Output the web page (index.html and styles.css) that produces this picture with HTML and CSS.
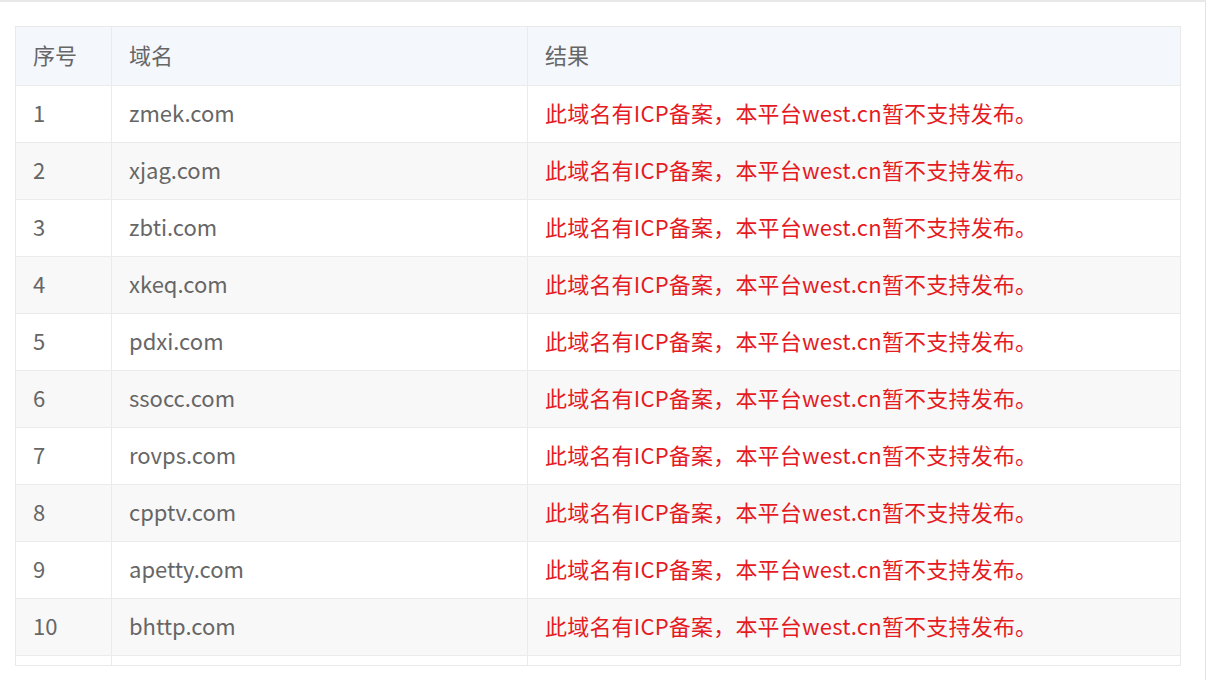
FILE: index.html
```html
<!DOCTYPE html>
<html lang="zh-CN">
<head>
<meta charset="utf-8">
<title>域名检测结果</title>
<link rel="stylesheet" href="styles.css">
</head>
<body>
<div class="frame">
  <div class="table-wrap">
    <table class="result-table">
      <colgroup>
        <col class="c-no">
        <col class="c-domain">
        <col class="c-result">
      </colgroup>
      <thead>
        <tr><th>序号</th><th>域名</th><th>结果</th></tr>
      </thead>
      <tbody>
        <tr><td>1</td><td>zmek.com</td><td class="err">此域名有ICP备案，本平台west.cn暂不支持发布。</td></tr>
        <tr><td>2</td><td>xjag.com</td><td class="err">此域名有ICP备案，本平台west.cn暂不支持发布。</td></tr>
        <tr><td>3</td><td>zbti.com</td><td class="err">此域名有ICP备案，本平台west.cn暂不支持发布。</td></tr>
        <tr><td>4</td><td>xkeq.com</td><td class="err">此域名有ICP备案，本平台west.cn暂不支持发布。</td></tr>
        <tr><td>5</td><td>pdxi.com</td><td class="err">此域名有ICP备案，本平台west.cn暂不支持发布。</td></tr>
        <tr><td>6</td><td>ssocc.com</td><td class="err">此域名有ICP备案，本平台west.cn暂不支持发布。</td></tr>
        <tr><td>7</td><td>rovps.com</td><td class="err">此域名有ICP备案，本平台west.cn暂不支持发布。</td></tr>
        <tr><td>8</td><td>cpptv.com</td><td class="err">此域名有ICP备案，本平台west.cn暂不支持发布。</td></tr>
        <tr><td>9</td><td>apetty.com</td><td class="err">此域名有ICP备案，本平台west.cn暂不支持发布。</td></tr>
        <tr><td>10</td><td>bhttp.com</td><td class="err">此域名有ICP备案，本平台west.cn暂不支持发布。</td></tr>
        <tr class="empty"><td></td><td></td><td></td></tr>
      </tbody>
    </table>
  </div>
</div>
</body>
</html>
```

FILE: styles.css
```css
* { box-sizing: border-box; }
html, body {
  margin: 0;
  padding: 0;
  background: #fff;
  overflow: hidden;
}
body {
  font-family: "Noto Sans CJK SC", "Noto Sans", sans-serif;
  color: #666;
}
.frame {
  width: 1206px;
  height: 680px;
  border-top: 2px solid #e8e8e8;
  border-right: 1px solid #e3e3e3;
  padding: 24px 0 0 15px;
}
.table-wrap {
  width: 1166px;
  height: 640px;
  border: 1px solid #e9e9e9;
  overflow: hidden;
}
.result-table {
  width: 1164px;
  table-layout: fixed;
  border-collapse: separate;
  border-spacing: 0;
  font-size: 22px;
}
.c-no { width: 96px; }
.c-domain { width: 416px; }
.c-result { width: 652px; }
.result-table th,
.result-table td {
  text-align: left;
  font-weight: normal;
  line-height: 30px;
  height: 57px;
  padding: 11px 17px 15px;
  border-bottom: 1px solid #ebebeb;
  border-right: 1px solid #ebebeb;
  white-space: nowrap;
  color: #666;
}
.result-table th:last-child,
.result-table td:last-child {
  border-right: none;
}
.result-table th {
  height: 59px;
  padding: 12px 17px 16px;
  background: #f4f7fc;
}
.result-table tbody tr:nth-child(even) td {
  background: #f8f8f8;
}
.result-table td.err {
  color: #e51b1f;
  letter-spacing: 0.2px;
}
```
